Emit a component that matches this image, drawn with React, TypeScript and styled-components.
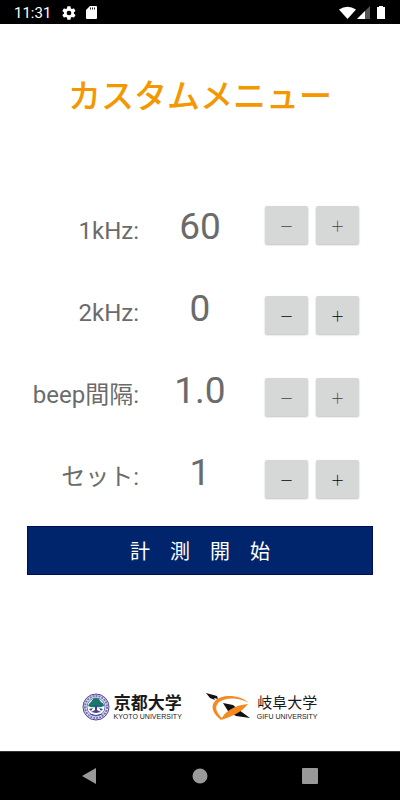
import React, { useState } from "react";
import styled, { createGlobalStyle } from "styled-components";

const GlobalStyle = createGlobalStyle`
  *, *::before, *::after { box-sizing: border-box; }
  body {
    margin: 0;
    background: #fff;
    font-family: Roboto, "Noto Sans CJK JP", sans-serif;
  }
`;

const Screen = styled.div`
  min-height: 100vh;
  display: flex;
  flex-direction: column;
`;

const StatusBar = styled.header`
  height: 24px;
  display: flex;
  align-items: center;
  padding: 1px 12px 0 14px;
  background: #000;
  color: #fff;
  font-size: 15px;
  line-height: 24px;
`;

const StatusIcons = styled.span<{ $end?: boolean }>`
  display: flex;
  align-items: center;
  gap: ${(p) => (p.$end ? "1px" : "9px")};
  margin-left: ${(p) => (p.$end ? "auto" : "10px")};
`;

const Main = styled.main`
  flex: 1;
  display: flex;
  flex-direction: column;
`;

const Title = styled.h1`
  margin: 45px 0 0;
  text-align: center;
  color: #f39800;
  font-family: "Noto Sans CJK JP", sans-serif;
  font-size: 33px;
  line-height: 50px;
  font-weight: 500;
`;

const Settings = styled.form`
  display: flex;
  flex-direction: column;
  margin-top: 67px;
`;

const Row = styled.div`
  display: grid;
  grid-template-columns: 35fr 30fr 35fr;
  align-items: center;
  height: 82px;
  color: #6b6b6b;
`;

const Label = styled.label`
  text-align: right;
  white-space: nowrap;
  font-size: 24px;
  line-height: 36px;
  padding: 8px 1px 0 0;
`;

const Value = styled.output`
  text-align: center;
  font-size: 37px;
  line-height: 44px;
`;

const Stepper = styled.div<{ $raised?: boolean }>`
  display: flex;
  gap: 8px;
  padding: ${(p) => (p.$raised ? "0 0 4px 5px" : "12px 0 0 5px")};
`;

const StepButton = styled.button<{ $soft?: boolean }>`
  width: 43px;
  height: 38px;
  border: 0;
  padding: 0;
  border-radius: 2px;
  background: #d6d7d7;
  box-shadow: 0 1px 2px rgba(0, 0, 0, 0.25);
  color: ${(p) => (p.$soft ? "#444" : "#000")};
  font-family: "Noto Sans CJK JP", sans-serif;
  font-size: 14px;
  font-weight: 300;
  line-height: 20px;
`;

const StartButton = styled.button`
  margin: 12px 27px 0;
  height: 49px;
  border: 1px solid #000f55;
  padding: 0;
  background: #00256c;
  color: #fff;
  font-family: "Noto Sans CJK JP", sans-serif;
  font-size: 20px;
  line-height: 30px;
`;

const Logos = styled.footer`
  margin-top: auto;
  padding-bottom: 30px;
  display: flex;
  justify-content: center;
  gap: 24px;
`;

const Logo = styled.div`
  display: flex;
  align-items: center;
  gap: 3px;
  color: #1a1a1a;
`;

const LogoText = styled.div`
  display: flex;
  flex-direction: column;
  align-items: center;
  gap: 2px;
  white-space: nowrap;
`;

const LogoName = styled.span<{ $bold?: boolean }>`
  font-family: "Noto Sans CJK JP", sans-serif;
  font-size: ${(p) => (p.$bold ? "17px" : "15px")};
  font-weight: ${(p) => (p.$bold ? 700 : 400)};
  line-height: 18px;
`;

const LogoSub = styled.span`
  font-family: "Liberation Sans", Arial, sans-serif;
  font-size: 7px;
  line-height: 8px;
`;

const NavBar = styled.nav`
  height: 49px;
  display: flex;
  justify-content: center;
  align-items: center;
  gap: 62px;
  border-top: 1px solid #333;
  background: #000;
`;

const NavButton = styled.button`
  width: 48px;
  height: 48px;
  display: grid;
  place-items: center;
  border: 0;
  padding: 0;
  background: none;
`;

function StatusLeft() {
  return (
    <StatusIcons>
      <svg width="16" height="16" viewBox="0 0 24 24" fill="#fff">
        <path d="M19.4 13a7.800 7.800 0 0 0 0-2l2.100-1.600a.5.5 0 0 0 .1-.6l-2-3.500a.5.5 0 0 0-.6-.2l-2.500 1a7.300 7.300 0 0 0-1.700-1l-.4-2.600a.5.5 0 0 0-.5-.5h-4a.5.5 0 0 0-.5.5L9 5.100a7.300 7.300 0 0 0-1.700 1l-2.500-1a.5.5 0 0 0-.6.2l-2 3.500a.5.5 0 0 0 .1.600L4.400 11a7.800 7.800 0 0 0 0 2l-2.100 1.600a.5.5 0 0 0-.1.600l2 3.500c.1.200.4.300.6.200l2.500-1a7.300 7.300 0 0 0 1.700 1l.4 2.600c0 .3.200.5.500.5h4c.3 0 .5-.2.500-.5l.4-2.600a7.300 7.300 0 0 0 1.700-1l2.500 1c.2.100.5 0 .6-.2l2-3.500a.5.5 0 0 0-.1-.6zM12 15.500a3.500 3.500 0 1 1 0-7 3.500 3.500 0 0 1 0 7z" />
      </svg>
      <svg width="11" height="14" viewBox="0 0 11 14">
        <path d="M4 0h6q1 0 1 1v11q0 1-1 1H1q-1 0-1-1V4z" fill="#fff" />
        <path d="M4.500 1.500v2M6.500 1.500v2M8.500 1.500v2" stroke="#222" />
      </svg>
    </StatusIcons>
  );
}

function StatusRight() {
  return (
    <StatusIcons $end>
      <svg width="17" height="14" viewBox="0 0 17 14">
        <path d="M0 3.500Q8.500-2 17 3.500L8.500 13z" fill="#fff" />
      </svg>
      <svg width="13" height="14" viewBox="0 0 13 14">
        <path d="M13 0v13H0z" fill="#555" />
        <path d="M8 5v8H0z" fill="#fff" />
      </svg>
      <svg width="17" height="14" viewBox="0 0 17 14">
        <path d="M8 0h4v1h2v12H6V1h2z" fill="#fff" />
      </svg>
    </StatusIcons>
  );
}

function KyotoEmblem() {
  return (
    <svg width="28" height="28" viewBox="0 0 28 28">
      <circle cx="14" cy="14" r="13" fill="#e3e2f3" stroke="#4a4794" />
      <circle cx="14" cy="14" r="11" fill="none" stroke="#7a77b5" strokeWidth="2" strokeDasharray="2 1" />
      <circle cx="14" cy="14" r="9" fill="#fff" stroke="#45428f" strokeWidth=".7" />
      <path d="M6 13q1-3 3-4 2-4 5-4t5 4q3 1 3 4-4 2-8 1-4 1-8-1z" fill="#16776f" />
      <path d="M13 12h2v5l4 2-5 1-5-1 4-2zM7 16l4-1-2 3zM21 16l-4-1 2 3z" fill="#45428f" />
      <path d="M8 21q6 3 12 0" fill="none" stroke="#45428f" />
    </svg>
  );
}

function GifuEmblem() {
  return (
    <svg width="48" height="28" viewBox="0 0 48 28">
      <path d="M0 0l11 3 1 3-4-1 1 2-5-2z" fill="#111" />
      <path d="M17 10l10 2 6 5 11 8-14-2-8-5z" fill="#111" />
      <path d="M43 10C35 2 16 0 9 8c-6 7 0 14 6 19l1-2C11 20 8 15 12 10 18 4 33 4 43 10z" fill="#f58a1f" />
      <path d="M15 27c3-8 13-15 27-16-6 8-15 12-27 16z" fill="#f58a1f" />
    </svg>
  );
}

interface SettingProps {
  id: string;
  label: string;
  initial: number;
  step?: number;
  digits?: number;
  raised?: boolean;
  soft?: boolean;
}

function Setting({ id, label, initial, step = 1, digits = 0, raised, soft }: SettingProps) {
  const [value, setValue] = useState(initial);
  return (
    <Row>
      <Label htmlFor={id}>{label}</Label>
      <Value id={id}>{value.toFixed(digits)}</Value>
      <Stepper $raised={raised}>
        <StepButton type="button" $soft={soft} onClick={() => setValue(Math.max(0, value - step))}>
          －
        </StepButton>
        <StepButton type="button" $soft={soft} onClick={() => setValue(value + step)}>
          ＋
        </StepButton>
      </Stepper>
    </Row>
  );
}

export default function App() {
  return (
    <Screen>
      <GlobalStyle />
      <StatusBar>
        <span>11:31</span>
        <StatusLeft />
        <StatusRight />
      </StatusBar>
      <Main>
        <Title>カスタムメニュー</Title>
        <Settings>
          <Setting id="low" label="1kHz:" initial={60} raised soft />
          <Setting id="high" label="2kHz:" initial={0} />
          <Setting id="interval" label="beep間隔:" initial={1} step={0.1} digits={1} soft />
          <Setting id="sets" label="セット:" initial={1} />
          <StartButton type="button">計　測　開　始</StartButton>
        </Settings>
        <Logos>
          <Logo>
            <KyotoEmblem />
            <LogoText>
              <LogoName $bold>京都大学</LogoName>
              <LogoSub>KYOTO UNIVERSITY</LogoSub>
            </LogoText>
          </Logo>
          <Logo>
            <GifuEmblem />
            <LogoText>
              <LogoName>岐阜大学</LogoName>
              <LogoSub>GIFU UNIVERSITY</LogoSub>
            </LogoText>
          </Logo>
        </Logos>
      </Main>
      <NavBar>
        <NavButton aria-label="Back">
          <svg width="18" height="18" viewBox="0 0 18 18">
            <path d="M15 1v16L1 9z" fill="#999" />
          </svg>
        </NavButton>
        <NavButton aria-label="Home">
          <svg width="16" height="16" viewBox="0 0 16 16">
            <circle cx="8" cy="8" r="7.500" fill="#999" />
          </svg>
        </NavButton>
        <NavButton aria-label="Overview">
          <svg width="16" height="16" viewBox="0 0 16 16">
            <rect width="16" height="16" rx="1" fill="#999" />
          </svg>
        </NavButton>
      </NavBar>
    </Screen>
  );
}
